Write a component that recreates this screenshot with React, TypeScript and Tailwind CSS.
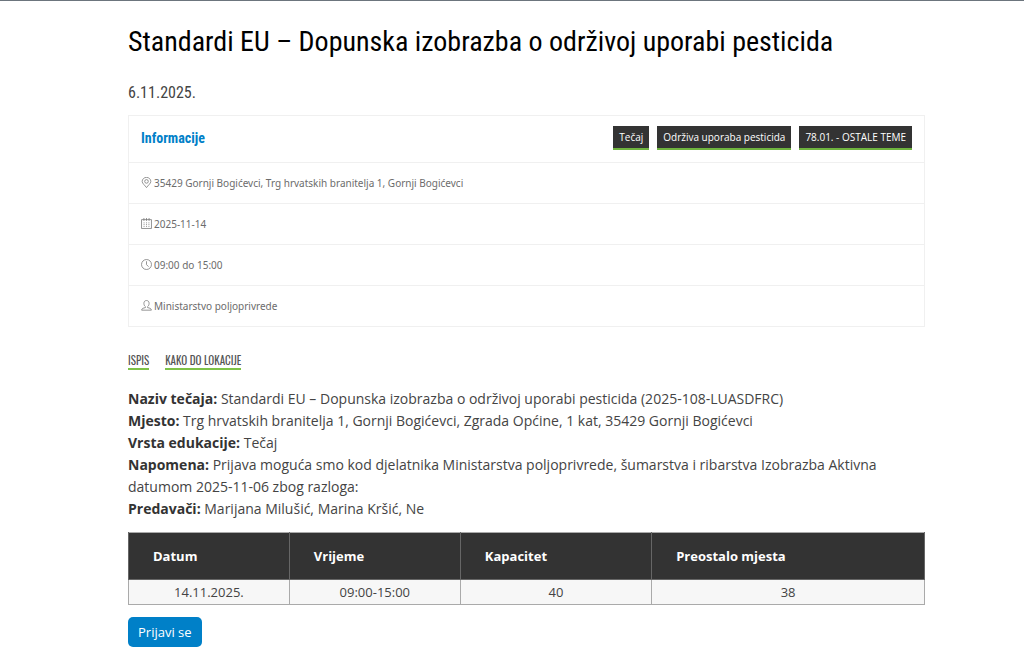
import type { ReactNode } from 'react';

const TAGS = ['Tečaj', 'Održiva uporaba pesticida', '78.01. - OSTALE TEME'];

const LINKS = ['Ispis', 'Kako do lokacije'];

const DETAILS = [
    { label: 'Naziv tečaja:', value: 'Standardi EU – Dopunska izobrazba o održivoj uporabi pesticida (2025-108-LUASDFRC)' },
    { label: 'Mjesto:', value: 'Trg hrvatskih branitelja 1, Gornji Bogićevci, Zgrada Općine, 1 kat, 35429 Gornji Bogićevci' },
    { label: 'Vrsta edukacije:', value: 'Tečaj' },
    {
        label: 'Napomena:',
        value: 'Prijava moguća smo kod djelatnika Ministarstva poljoprivrede, šumarstva i ribarstva Izobrazba Aktivna datumom 2025-11-06 zbog razloga:',
    },
    { label: 'Predavači:', value: 'Marijana Milušić, Marina Kršić, Ne' },
];

const COLUMNS = [
    { title: 'Datum', value: '14.11.2025.' },
    { title: 'Vrijeme', value: '09:00-15:00' },
    { title: 'Kapacitet', value: '40' },
    { title: 'Preostalo mjesta', value: '38' },
];

function Icon({ children }: { children: ReactNode }) {
    return (
        <svg viewBox="0 0 17 17" className="-mt-0.5 size-[11px] shrink-0" fill="none" stroke="#777" strokeWidth="1.2" aria-hidden="true">
            {children}
        </svg>
    );
}

function PinIcon() {
    return (
        <Icon>
            <path d="M8.5 16.4C6.2 12.9 1.8 10 1.8 6.9a6.7 6.3 0 0 1 13.4 0c0 3.1-4.4 6-6.7 9.5z" />
            <circle cx="8.5" cy="6.8" r="2.8" />
        </Icon>
    );
}

function CalendarIcon() {
    return (
        <Icon>
            <path d="M.8 2.5h15.4v13.7H.8zM4.5 0v4.5M8.5 0v4.5M12.5 0v4.5" />
            <path d="M4 7.5h1.5M7.8 7.5h1.5M11.5 7.5H13M4 10.2h1.5M7.8 10.2h1.5M11.5 10.2H13M4 13h1.5M7.8 13h1.5M11.5 13H13" />
        </Icon>
    );
}

function ClockIcon() {
    return (
        <Icon>
            <circle cx="8.5" cy="8.5" r="7.7" />
            <path d="M8.5 3.5v5.2l3.2 3.2" />
        </Icon>
    );
}

function UserIcon() {
    return (
        <Icon>
            <path d="M6.8 10.2C5.2 9 4.5 7.4 4.5 5c0-2.4 1.5-4.2 4-4.2s4 1.8 4 4.2c0 2.4-.7 4-2.3 5.2v1.6c3 .6 5.8 1.1 5.8 3.9H1c0-2.8 2.8-3.3 5.8-3.9z" />
        </Icon>
    );
}

function InfoRow({ icon, children }: { icon: ReactNode; children: ReactNode }) {
    return (
        <li className="flex items-center gap-0.5 border-t border-[#f0f0f0] px-3 py-3 font-['Noto_Sans',sans-serif] text-[10px] leading-4 text-[#6c6c6c]">
            {icon}
            <span>{children}</span>
        </li>
    );
}

export default function App() {
    return (
        <div className="border-t border-[#6c757d] bg-white font-['Open_Sans',sans-serif] text-[#444]">
            <main className="pt-5 pr-[99px] pb-6 pl-32">
                <h1 className="font-['Roboto_Condensed',Roboto,sans-serif] text-[28px] leading-[42px] text-black">
                    Standardi EU – Dopunska izobrazba o održivoj uporabi pesticida
                </h1>
                <p className="mt-5 font-['Roboto_Condensed',Roboto,sans-serif] text-base leading-5">6.11.2025.</p>

                {/* Course info card */}
                <section className="mt-3 border border-[#f0f0f0]">
                    <div className="flex items-center justify-between px-3 pt-2.5 pb-3">
                        <h2 className="font-['Roboto_Condensed',Roboto,sans-serif] text-sm leading-6 font-bold text-[#0080c8]">
                            Informacije
                        </h2>
                        <ul className="flex gap-2">
                            {TAGS.map(tag => (
                                <li key={tag} className="border-b-2 border-[#6fb43f] bg-[#333] px-1.5 text-[10px] leading-[22px] text-white">
                                    {tag}
                                </li>
                            ))}
                        </ul>
                    </div>
                    <ul>
                        <InfoRow icon={<PinIcon />}>35429 Gornji Bogićevci, Trg hrvatskih branitelja 1, Gornji Bogićevci</InfoRow>
                        <InfoRow icon={<CalendarIcon />}>2025-11-14</InfoRow>
                        <InfoRow icon={<ClockIcon />}>09:00 do 15:00</InfoRow>
                        <InfoRow icon={<UserIcon />}>Ministarstvo poljoprivrede</InfoRow>
                    </ul>
                </section>

                <nav className="mt-[25px] flex gap-4">
                    {LINKS.map(link => (
                        <a
                            key={link}
                            href="#"
                            className="border-b-2 border-[#7dc247] font-[Oswald,'Roboto_Condensed',sans-serif] text-[11px] leading-4 text-[#555] uppercase"
                        >
                            {link}
                        </a>
                    ))}
                </nav>

                <div className="mt-[18px] text-sm leading-[22px]">
                    {DETAILS.map(({ label, value }) => (
                        <p key={label}>
                            <strong className="text-[#333]">{label}</strong> {value}
                        </p>
                    ))}
                </div>

                {/* Schedule */}
                <table className="mt-3 w-full border-collapse border border-[#aaa] text-[13px]">
                    <thead>
                        <tr className="bg-[#333] text-left text-white">
                            {COLUMNS.map(({ title }) => (
                                <th key={title} scope="col" className="border-x border-b border-[#666] px-6 py-3 leading-[22px] font-bold">
                                    {title}
                                </th>
                            ))}
                        </tr>
                    </thead>
                    <tbody>
                        <tr className="bg-[#f7f7f7] text-center">
                            {COLUMNS.map(({ title, value }) => (
                                <td key={title} className="border border-[#aaa] leading-6">
                                    {value}
                                </td>
                            ))}
                        </tr>
                    </tbody>
                </table>

                <button type="button" className="mt-3 rounded-[5px] bg-[#0080c8] px-2.5 py-1 text-[13px] leading-[22px] text-white">
                    Prijavi se
                </button>
            </main>
        </div>
    );
}
